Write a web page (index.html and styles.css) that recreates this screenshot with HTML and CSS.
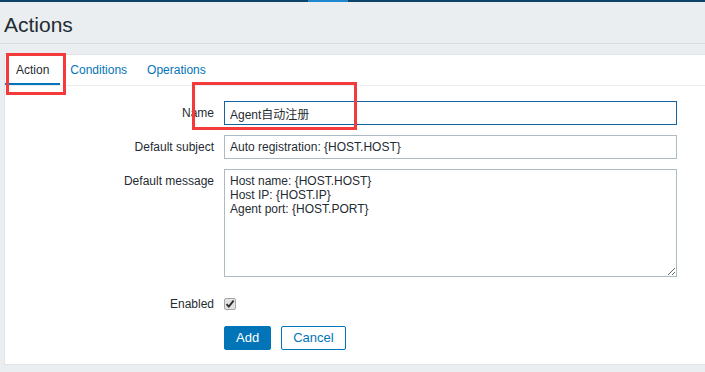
FILE: index.html
```html
<!DOCTYPE html>
<html lang="en">
<head>
<meta charset="utf-8">
<title>Actions</title>
<link rel="stylesheet" href="styles.css">
</head>
<body>
<div class="topbar"><span class="topbar-active"></span></div>
<header class="page-header"><h1 class="page-title">Actions</h1></header>
<main class="panel">
  <nav class="tabs">
    <span class="tab tab-active">Action</span>
    <a class="tab">Conditions</a>
    <a class="tab">Operations</a>
  </nav>
  <form class="form">
    <label class="form-label">Name</label>
    <div class="form-field"><input class="text-input text-input-focus" type="text" value="Agent自动注册"></div>
    <label class="form-label">Default subject</label>
    <div class="form-field"><input class="text-input" type="text" value="Auto registration: {HOST.HOST}"></div>
    <label class="form-label">Default message</label>
    <div class="form-field"><textarea class="text-area">Host name: {HOST.HOST}
Host IP: {HOST.IP}
Agent port: {HOST.PORT}</textarea></div>
    <label class="form-label form-label-check">Enabled</label>
    <div class="form-field form-field-check">
      <span class="checkbox"><svg width="10" height="10" viewBox="0 0 10 10"><path d="M1.5 5.2 L3.8 7.6 L8.6 1.6" fill="none" stroke="#2b2b2b" stroke-width="1.8"/></svg></span>
    </div>
    <span class="form-label"></span>
    <div class="form-field form-buttons">
      <button type="button" class="btn btn-primary">Add</button>
      <button type="button" class="btn btn-alt">Cancel</button>
    </div>
  </form>
  <span class="mark mark-tab"></span>
  <span class="mark mark-name"></span>
</main>
</body>
</html>
```
FILE: styles.css
```css
html, body {
  margin: 0;
  padding: 0;
}
body {
  background: #ebeef0;
  font-family: "Liberation Sans", Arial, "Noto Sans CJK SC", sans-serif;
  font-size: 12px;
  color: #1f2c33;
  height: 372px;
  overflow: hidden;
}
.topbar {
  height: 2px;
  background: #0b4468;
  display: flex;
}
.topbar-active {
  margin-left: 308px;
  width: 40px;
  background: #1e87cd;
}
.page-header {
  padding: 11px 0 6px 4px;
  border-bottom: 1px solid #d9dee2;
}
.page-title {
  margin: 0;
  font-size: 21px;
  line-height: 24px;
  font-weight: normal;
  color: #1f2c33;
}
.panel {
  position: relative;
  margin: 10px 0 0 4px;
  background: #fff;
  border: 1px solid #dfe4e7;
  border-right: none;
}
.tabs {
  display: flex;
  height: 30px;
  border-bottom: 1px solid #ebeef0;
}
.tab {
  padding: 0 10px;
  line-height: 30px;
  color: #0275b8;
}
.tab-active {
  padding: 0 11px;
  color: #1f2c33;
  box-shadow: inset 0 -2px 0 #0275b8;
}
.form {
  display: grid;
  grid-template-columns: 209px 453px;
  column-gap: 10px;
  row-gap: 10px;
  padding: 15px 0 14px 0;
}
.form-label {
  text-align: right;
  line-height: 24px;
}
.form-label-check,
.form-field-check {
  margin-top: 5px;
}
.form-field {
  display: flex;
}
.text-input {
  box-sizing: border-box;
  width: 453px;
  height: 24px;
  margin: 0;
  padding: 0 5px;
  border: 1px solid #acbbc4;
  font-family: "Liberation Sans", Arial, "Noto Sans CJK SC", sans-serif;
  font-size: 12px;
  color: #1f2c33;
  outline: none;
}
.text-input-focus {
  border-color: #1463a0;
}
.text-area {
  box-sizing: border-box;
  width: 453px;
  height: 108px;
  margin: 0;
  padding: 4px 5px;
  border: 1px solid #acbbc4;
  font-family: "Liberation Sans", Arial, sans-serif;
  font-size: 12px;
  line-height: 14px;
  color: #1f2c33;
  outline: none;
}
.form-field-check {
  align-items: center;
  height: 24px;
}
.checkbox {
  box-sizing: border-box;
  width: 12px;
  height: 12px;
  border: 1px solid #a6a6a6;
  border-radius: 2px;
  background: #e2e2e2;
  display: flex;
  align-items: center;
  justify-content: center;
}
.form-buttons {
  gap: 10px;
}
.btn {
  box-sizing: border-box;
  height: 24px;
  padding: 0 11px;
  border-radius: 2px;
  font-family: "Liberation Sans", Arial, sans-serif;
  font-size: 13px;
  line-height: 22px;
  margin: 0;
  cursor: pointer;
}
.btn-primary {
  background: #0275b8;
  border: 1px solid #0275b8;
  color: #fff;
}
.btn-alt {
  background: #fff;
  border: 1px solid #0275b8;
  color: #0275b8;
}
.mark {
  position: absolute;
  box-sizing: border-box;
  border: 3px solid #f43a3a;
  pointer-events: none;
}
.mark-tab {
  left: 1px;
  top: -2px;
  width: 60px;
  height: 42px;
}
.mark-name {
  left: 187px;
  top: 27px;
  width: 165px;
  height: 48px;
}
```
